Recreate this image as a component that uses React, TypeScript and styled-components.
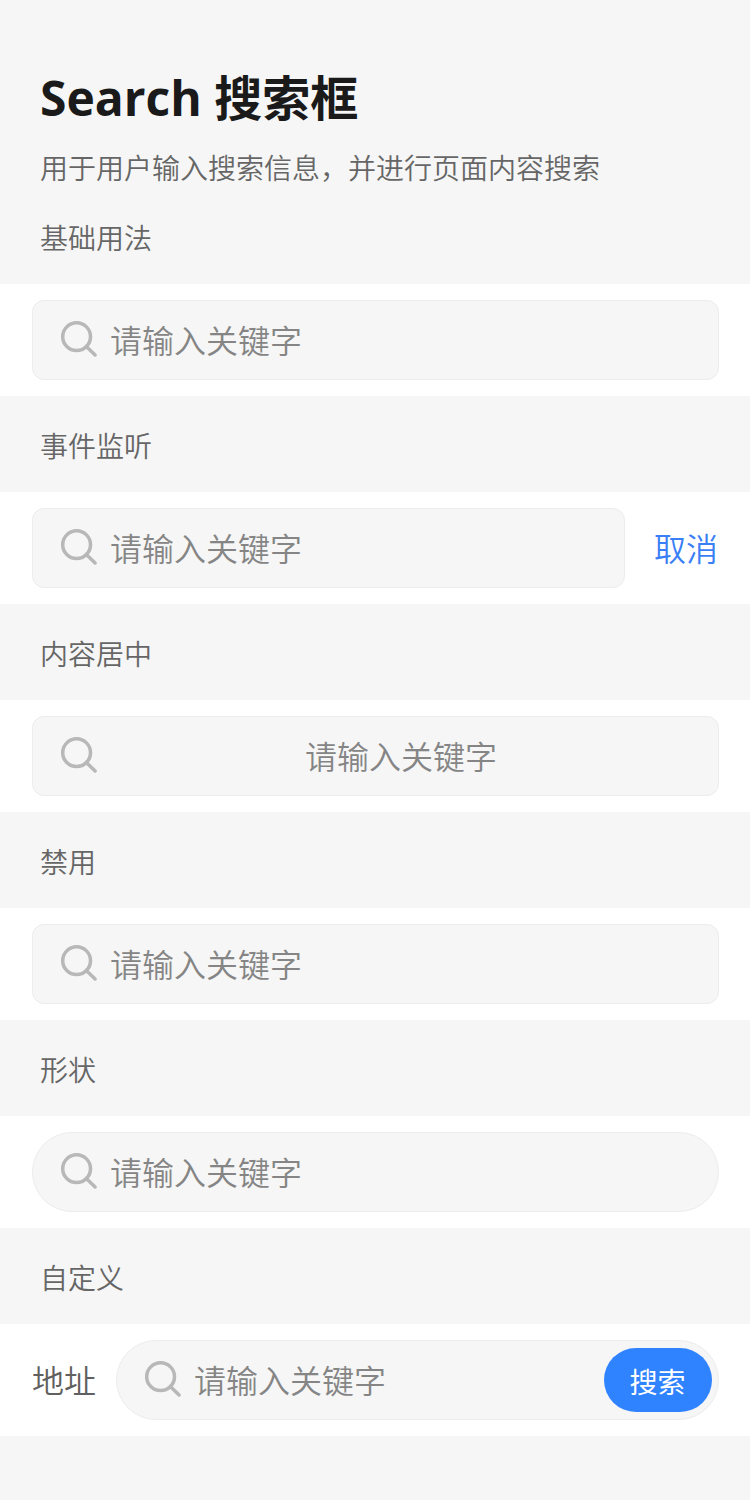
import React from 'react';
import styled, { createGlobalStyle } from 'styled-components';

const GlobalStyle = createGlobalStyle`
  * { box-sizing: border-box; }
  body {
    margin: 0;
    background: #f6f6f6;
    font-family: "Open Sans", "Noto Sans CJK SC", sans-serif;
  }
`;

const Page = styled.main`
  width: 100%;
  min-height: 1500px;
  background: #f6f6f6;
`;

const Header = styled.header`
  height: 188px;
  padding: 64px 40px 0;
`;

const Title = styled.h1`
  margin: 0;
  font-size: 48px;
  line-height: 68px;
  font-weight: 700;
  color: #1a1a1a;
  white-space: nowrap;
`;

const Description = styled.p`
  margin: 16px 0 0;
  font-size: 28px;
  line-height: 40px;
  font-weight: 350;
  color: #666;
  white-space: nowrap;
`;

const SectionTitle = styled.h2`
  margin: 0;
  height: 96px;
  padding: 2px 40px 0;
  font-size: 28px;
  line-height: 96px;
  font-weight: 350;
  color: #666;
`;

const SearchBar = styled.div`
  display: flex;
  align-items: center;
  height: 112px;
  padding: 16px 31px 16px 32px;
  background: #fff;
`;

const Field = styled.div<{ $round?: boolean }>`
  flex: 1;
  display: flex;
  align-items: center;
  height: 80px;
  padding: 0 6px 0 26px;
  border: 1px solid #ececec;
  border-radius: ${(p) => (p.$round ? '40px' : '12px')};
  background: #f6f6f6;
`;

const Placeholder = styled.span<{ $center?: boolean }>`
  flex: 1;
  margin-left: 11px;
  padding: 2px ${(p) => (p.$center ? '20px' : '0')} 0 0;
  font-size: 32px;
  line-height: 44px;
  font-weight: 350;
  text-align: ${(p) => (p.$center ? 'center' : 'left')};
  color: #858585;
`;

const Cancel = styled.span`
  margin: 0 1px 0 29px;
  padding-top: 2px;
  font-size: 32px;
  line-height: 44px;
  font-weight: 350;
  color: #3a7ff5;
`;

const Label = styled.span`
  margin-right: 20px;
  padding-top: 2px;
  font-size: 32px;
  line-height: 44px;
  font-weight: 350;
  color: #606060;
`;

const SearchButton = styled.button`
  width: 108px;
  height: 64px;
  padding: 2px 1px 0 0;
  border: 0;
  border-radius: 32px;
  background: #3083ff;
  color: #fff;
  font: 400 28px/62px "Noto Sans CJK SC", sans-serif;
`;

const Glyph = styled.svg`
  flex: none;
  width: 40px;
  height: 40px;
`;

const SearchIcon = () => (
  <Glyph viewBox="0 0 40 40" fill="none" stroke="#b8b8b8" strokeWidth="3.5">
    <circle cx="17.6" cy="16.7" r="13.9" />
    <path d="M27.3 26.4 36.1 35" strokeLinecap="round" />
  </Glyph>
);

interface SearchFieldProps {
  round?: boolean;
  center?: boolean;
  children?: React.ReactNode;
}

const SearchField = ({ round, center, children }: SearchFieldProps) => (
  <Field $round={round}>
    <SearchIcon />
    <Placeholder $center={center}>请输入关键字</Placeholder>
    {children}
  </Field>
);

export default function App() {
  return (
    <Page>
      <GlobalStyle />
      <Header>
        <Title>Search 搜索框</Title>
        <Description>用于用户输入搜索信息，并进行页面内容搜索</Description>
      </Header>
      <SectionTitle>基础用法</SectionTitle>
      <SearchBar><SearchField /></SearchBar>
      <SectionTitle>事件监听</SectionTitle>
      <SearchBar><SearchField /><Cancel>取消</Cancel></SearchBar>
      <SectionTitle>内容居中</SectionTitle>
      <SearchBar><SearchField center /></SearchBar>
      <SectionTitle>禁用</SectionTitle>
      <SearchBar><SearchField /></SearchBar>
      <SectionTitle>形状</SectionTitle>
      <SearchBar><SearchField round /></SearchBar>
      <SectionTitle>自定义</SectionTitle>
      <SearchBar>
        <Label>地址</Label>
        <SearchField round><SearchButton>搜索</SearchButton></SearchField>
      </SearchBar>
    </Page>
  );
}
